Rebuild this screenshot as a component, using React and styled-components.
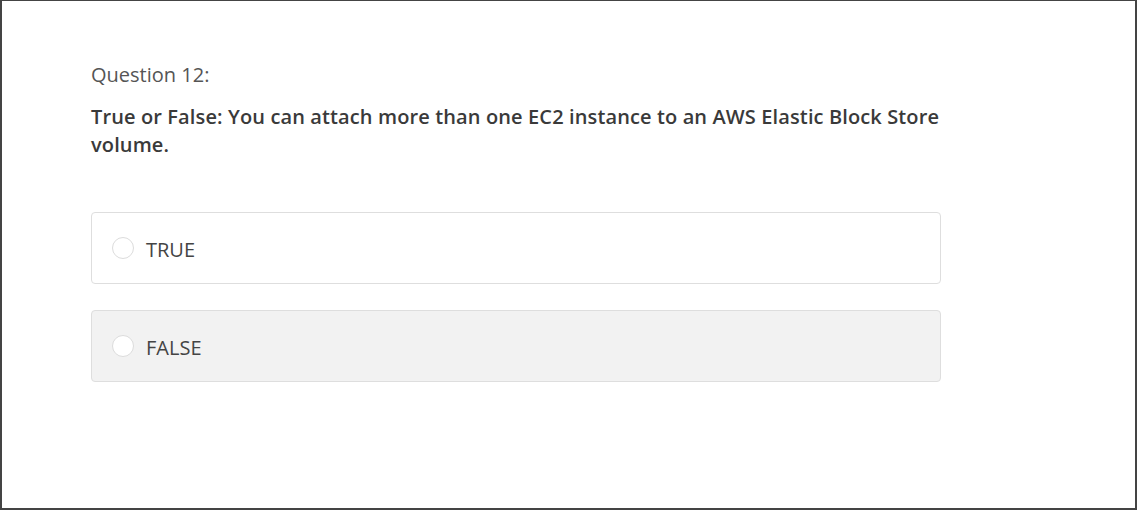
import React from "react";
import styled, { createGlobalStyle } from "styled-components";

const GlobalStyle = createGlobalStyle`
  html, body {
    margin: 0;
    padding: 0;
    background: #fff;
  }
  * {
    box-sizing: border-box;
  }
`;

const Frame = styled.div`
  width: 1137px;
  height: 510px;
  border: 2px solid #444;
  border-top-width: 1px;
  background: #fff;
  font-family: "Open Sans", "Noto Sans", sans-serif;
  padding: 62px 0 0 89px;
`;

const Label = styled.div`
  font-size: 20px;
  line-height: 24px;
  color: #555;
  margin-bottom: 16px;
`;

const Prompt = styled.div`
  width: 860px;
  font-size: 20px;
  font-weight: 600;
  line-height: 28px;
  letter-spacing: 0.12px;
  color: #3a3a3a;
  margin-bottom: 53px;
`;

const Options = styled.div`
  display: flex;
  flex-direction: column;
  gap: 26px;
  width: 850px;
`;

const Option = styled.label`
  display: flex;
  align-items: center;
  gap: 12px;
  height: 72px;
  padding: 0 20px;
  border: 1px solid #dedede;
  border-radius: 4px;
  background: ${(p) => (p.$hover ? "#f2f2f2" : "#fff")};
  cursor: pointer;
`;

const Radio = styled.span`
  width: 22px;
  height: 22px;
  border-radius: 50%;
  border: 1px solid #dcdcdc;
  background: #fff;
  flex-shrink: 0;
`;

const OptionText = styled.span`
  font-size: 20px;
  line-height: 24px;
  color: #444;
  padding-top: 4px;
`;

const options = [
  { text: "TRUE", hover: false },
  { text: "FALSE", hover: true },
];

export default function App() {
  return (
    <>
      <GlobalStyle />
      <Frame>
        <Label>Question 12:</Label>
        <Prompt>
          True or False: You can attach more than one EC2 instance to an AWS
          Elastic Block Store volume.
        </Prompt>
        <Options>
          {options.map((o) => (
            <Option key={o.text} $hover={o.hover}>
              <Radio />
              <OptionText>{o.text}</OptionText>
            </Option>
          ))}
        </Options>
      </Frame>
    </>
  );
}
